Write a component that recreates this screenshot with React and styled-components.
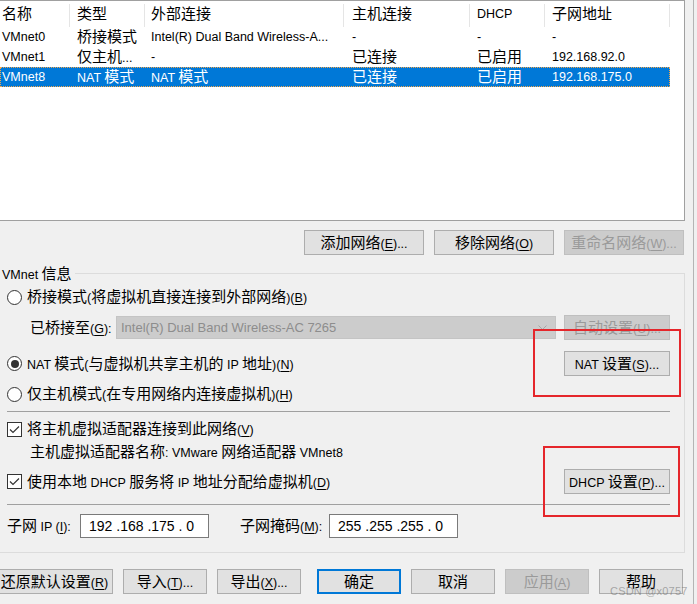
import React from "react";
import styled, { createGlobalStyle } from "styled-components";

const Global = createGlobalStyle`
  html, body { margin: 0; padding: 0; background: #f0f0f0; overflow: hidden; }
  * { box-sizing: border-box; }
`;

const HAN = /&(.)|([\u2E80-\u9FFF\u3000-\u303F\uFF00-\uFFEF]+)|([^&\u2E80-\u9FFF\u3000-\u303F\uFF00-\uFFEF]+)/g;

const Han = styled.span`
  font-family: "Noto Sans CJK SC", "Noto Sans CJK JP", sans-serif;
  font-size: 15px;
`;
const Key = styled.span`
  text-decoration: underline;
  text-underline-offset: 2px;
`;
const Text = styled.span`
  white-space: pre;
`;

function T({ s }) {
  const out = [];
  let m;
  let i = 0;
  HAN.lastIndex = 0;
  while ((m = HAN.exec(s))) {
    if (m[1]) out.push(<Key key={i++}>{m[1]}</Key>);
    else if (m[2]) out.push(<Han key={i++}>{m[2]}</Han>);
    else out.push(<React.Fragment key={i++}>{m[3]}</React.Fragment>);
  }
  return <Text>{out}</Text>;
}

const Page = styled.div`
  position: relative;
  width: 697px;
  height: 604px;
  overflow: hidden;
  display: flex;
  background: #f0f0f0;
  font-family: "Liberation Sans", Arial, "Noto Sans CJK SC", sans-serif;
  font-size: 12.5px;
  line-height: 16px;
  color: #000;
`;

const Main = styled.div`
  width: 685px;
  flex: none;
  display: flex;
  flex-direction: column;
`;

const Edge = styled.div`
  margin-left: 8px;
  width: 1px;
  background: #b4b4b4;
`;

/* ---------- list view ---------- */
const List = styled.div`
  margin-left: -1px;
  width: 686px;
  height: 221px;
  border: 1px solid #a0a0a0;
  background: #fff;
  flex: none;
`;

const COLS = "70px 75px 199px 126px 75px 125px";
const PADS = [2, 7, 6, 8, 7, 7];

const Header = styled.div`
  display: grid;
  grid-template-columns: ${COLS};
  width: 670px;
  height: 26px;
`;

const HeadCell = styled.div`
  position: relative;
  display: flex;
  align-items: center;
  padding-left: ${(p) => p.$pad}px;
  white-space: nowrap;
  &::after {
    content: "";
    position: absolute;
    right: 0;
    top: 3px;
    bottom: 0;
    width: 1px;
    background: #e5e5e5;
  }
`;

const Row = styled.div`
  display: grid;
  grid-template-columns: ${COLS};
  width: 670px;
  height: 20px;
  background: ${(p) => (p.$sel ? "#0078d7" : "transparent")};
  color: ${(p) => (p.$sel ? "#fff" : "#000")};
  outline: ${(p) => (p.$sel ? "1px dotted #f3a64a" : "none")};
  outline-offset: -1px;
`;

const Cell = styled.div`
  display: flex;
  align-items: center;
  padding-left: ${(p) => p.$pad}px;
  white-space: nowrap;
`;

/* ---------- buttons ---------- */
const Btn = styled.div`
  height: 25px;
  width: ${(p) => p.$w || 84}px;
  flex: none;
  display: flex;
  align-items: center;
  justify-content: center;
  white-space: nowrap;
  background: ${(p) => (p.$off ? "#cccccc" : "#e1e1e1")};
  border: ${(p) =>
    p.$def ? "2px solid #0078d7" : `1px solid ${p.$off ? "#bfbfbf" : "#adadad"}`};
  color: ${(p) => (p.$off ? "#9a9a9a" : "#000")};
  margin-left: ${(p) => p.$ml || 0}px;
`;

const ButtonRow = styled.div`
  display: flex;
  justify-content: flex-end;
  gap: 10px;
  margin-top: 9px;
  padding-right: 1px;
`;

/* ---------- group ---------- */
const Group = styled.div`
  position: relative;
  margin-top: 18px;
  border-top: 1px solid #dcdcdc;
  border-right: 1px solid #dcdcdc;
  border-bottom: 1px solid #dcdcdc;
  padding: 11px 14px 14px 7px;
  display: flex;
  flex-direction: column;
`;

const Legend = styled.div`
  position: absolute;
  left: 0;
  top: -9px;
  padding: 0 3px 0 2px;
  background: #f0f0f0;
  line-height: 16px;
`;

const Line = styled.div`
  display: flex;
  align-items: center;
  height: ${(p) => p.$h || 24}px;
  margin-top: ${(p) => p.$mt || 0}px;
  padding-left: ${(p) => p.$indent || 0}px;
`;

const Choice = styled.div`
  display: flex;
  align-items: center;
  gap: 5px;
  white-space: nowrap;
`;

const RadioDot = styled.span`
  width: 15px;
  height: 15px;
  border-radius: 50%;
  border: 1px solid #333;
  background: #fff;
  flex: none;
  display: flex;
  align-items: center;
  justify-content: center;
  &::after {
    content: "";
    width: 8px;
    height: 8px;
    border-radius: 50%;
    background: ${(p) => (p.$on ? "#333" : "transparent")};
  }
`;

const Box = styled.span`
  width: 15px;
  height: 15px;
  border: 1px solid #333;
  background: #fff;
  flex: none;
  display: flex;
  align-items: center;
  justify-content: center;
`;

const Sep = styled.div`
  height: 1px;
  background: #a0a0a0;
  margin-top: ${(p) => p.$mt}px;
  flex: none;
`;

const FieldLabel = styled.div`
  width: ${(p) => p.$w}px;
  flex: none;
  white-space: nowrap;
  margin-left: ${(p) => p.$ml || 0}px;
`;

const Select = styled.div`
  width: 440px;
  height: 23px;
  flex: none;
  background: #cccccc;
  border: 1px solid #c4c4c4;
  color: #8d8d8d;
  font-size: 13px;
  display: flex;
  align-items: center;
  justify-content: space-between;
  padding: 0 8px 0 4px;
`;

const Spacer = styled.div`
  flex: 1;
`;

const IpBox = styled.div`
  width: 129px;
  height: 24px;
  flex: none;
  background: #fff;
  border: 1px solid #7a7a7a;
  display: flex;
  align-items: center;
  padding-left: 8px;
  font-size: 14px;
  white-space: pre;
`;

const BottomRow = styled.div`
  display: flex;
  gap: 10px;
  margin-top: 16px;
  margin-left: -4px;
`;

const RedBox = styled.div`
  position: absolute;
  left: ${(p) => p.$x}px;
  top: ${(p) => p.$y}px;
  width: ${(p) => p.$w}px;
  height: ${(p) => p.$h}px;
  border: 2px solid #e5262b;
  pointer-events: none;
`;

const Watermark = styled.div`
  position: absolute;
  left: 610px;
  top: 583px;
  font-size: 11px;
  font-family: "Liberation Sans", Arial, sans-serif;
  color: rgba(110, 110, 110, 0.55);
  letter-spacing: 0.2px;
  pointer-events: none;
`;

const Check = () => (
  <svg width="11" height="9" viewBox="0 0 11 9">
    <polyline points="1,4.5 4,7.5 10,1.5" fill="none" stroke="#333" strokeWidth="1.2" />
  </svg>
);

const Chevron = () => (
  <svg width="9" height="5" viewBox="0 0 9 5">
    <polyline points="0.5,0.5 4.5,4.5 8.5,0.5" fill="none" stroke="#a6a6a6" strokeWidth="1" />
  </svg>
);

const headers = ["名称", "类型", "外部连接", "主机连接", "DHCP", "子网地址"];
const rows = [
  ["VMnet0", "桥接模式", "Intel(R) Dual Band Wireless-A...", "-", "-", "-"],
  ["VMnet1", "仅主机...", "-", "已连接", "已启用", "192.168.92.0"],
  ["VMnet8", "NAT 模式", "NAT 模式", "已连接", "已启用", "192.168.175.0"],
];

export default function App() {
  return (
    <Page>
      <Global />
      <Main>
        <List>
          <Header>
            {headers.map((h, i) => (
              <HeadCell key={h} $pad={PADS[i]}>
                <T s={h} />
              </HeadCell>
            ))}
          </Header>
          {rows.map((r, ri) => (
            <Row key={r[0]} $sel={ri === 2}>
              {r.map((c, i) => (
                <Cell key={i} $pad={PADS[i]}>
                  <T s={c} />
                </Cell>
              ))}
            </Row>
          ))}
        </List>

        <ButtonRow>
          <Btn $w={120}><T s="添加网络(&E)..." /></Btn>
          <Btn $w={120}><T s="移除网络(&O)" /></Btn>
          <Btn $w={120} $off><T s="重命名网络(&W)..." /></Btn>
        </ButtonRow>

        <Group>
          <Legend><T s="VMnet 信息" /></Legend>

          <Line>
            <Choice>
              <RadioDot />
              <T s="桥接模式(将虚拟机直接连接到外部网络)(&B)" />
            </Choice>
          </Line>

          <Line $h={25} $mt={6} $indent={23}>
            <FieldLabel $w={86}><T s="已桥接至(&G):" /></FieldLabel>
            <Select>
              <span>Intel(R) Dual Band Wireless-AC 7265</span>
              <Chevron />
            </Select>
            <Spacer />
            <Btn $w={106} $off><T s="自动设置(&U)..." /></Btn>
          </Line>

          <Line $h={25} $mt={11}>
            <Choice>
              <RadioDot $on />
              <T s="NAT 模式(与虚拟机共享主机的 IP 地址)(&N)" />
            </Choice>
            <Spacer />
            <Btn $w={106}><T s="NAT 设置(&S)..." /></Btn>
          </Line>

          <Line $mt={6}>
            <Choice>
              <RadioDot />
              <T s="仅主机模式(在专用网络内连接虚拟机)(&H)" />
            </Choice>
          </Line>

          <Sep $mt={5} />

          <Line $h={20} $mt={7}>
            <Choice>
              <Box><Check /></Box>
              <T s="将主机虚拟适配器连接到此网络(&V)" />
            </Choice>
          </Line>

          <Line $h={20} $mt={3} $indent={23}>
            <T s="主机虚拟适配器名称: VMware 网络适配器 VMnet8" />
          </Line>

          <Line $h={25} $mt={7}>
            <Choice>
              <Box><Check /></Box>
              <T s="使用本地 DHCP 服务将 IP 地址分配给虚拟机(&D)" />
            </Choice>
            <Spacer />
            <Btn $w={106}><T s="DHCP 设置(&P)..." /></Btn>
          </Line>

          <Sep $mt={10} />

          <Line $h={24} $mt={9}>
            <FieldLabel $w={73}><T s="子网 IP (&I):" /></FieldLabel>
            <IpBox>192 .168 .175 . 0</IpBox>
            <FieldLabel $w={89} $ml={31}><T s="子网掩码(&M):" /></FieldLabel>
            <IpBox>255 .255 .255 . 0</IpBox>
          </Line>
        </Group>

        <BottomRow>
          <Btn $w={117}><T s="还原默认设置(&R)" /></Btn>
          <Btn><T s="导入(&T)..." /></Btn>
          <Btn><T s="导出(&X)..." /></Btn>
          <Btn $def $ml={6}><T s="确定" /></Btn>
          <Btn><T s="取消" /></Btn>
          <Btn $off><T s="应用(&A)" /></Btn>
          <Btn><T s="帮助" /></Btn>
        </BottomRow>
      </Main>
      <Edge />

      <RedBox $x={533} $y={329} $w={148} $h={68} />
      <RedBox $x={543} $y={446} $w={137} $h={71} />
      <Watermark>CSDN @x0757</Watermark>
    </Page>
  );
}
